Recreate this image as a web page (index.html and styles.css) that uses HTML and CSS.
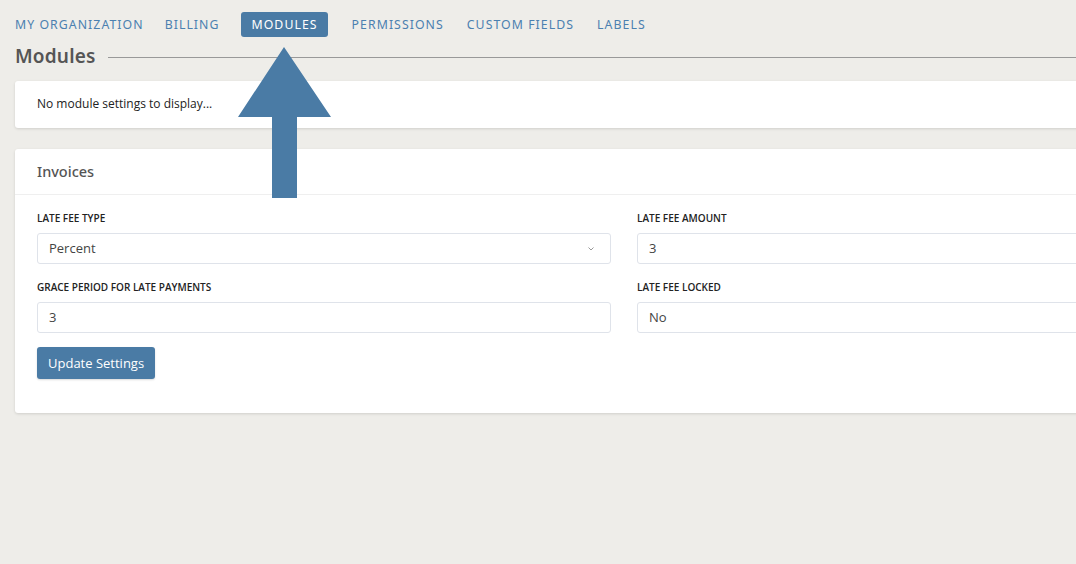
FILE: index.html
```html
<!DOCTYPE html>
<html lang="en">
<head>
  <meta charset="UTF-8">
  <meta name="viewport" content="width=device-width, initial-scale=1.0">
  <title>Settings - Modules</title>
  <link rel="stylesheet" href="styles.css">
</head>
<body>
  <div class="page">
    <nav class="tabs">
      <a class="tab">My Organization</a>
      <a class="tab">Billing</a>
      <a class="tab active">Modules</a>
      <a class="tab">Permissions</a>
      <a class="tab">Custom Fields</a>
      <a class="tab">Labels</a>
    </nav>

    <div class="section-title">
      <h2>Modules</h2>
      <span class="rule"></span>
    </div>

    <div class="card empty">
      No module settings to display...
    </div>

    <div class="card">
      <div class="card-head">Invoices</div>
      <div class="card-body">
        <div class="fields">
          <div class="field">
            <label>Late Fee Type</label>
            <div class="input select">
              <span>Percent</span>
              <svg class="caret" width="8" height="6" viewBox="0 0 8 6"><path d="M1.5 1.5 L4 4 L6.5 1.5" fill="none" stroke="#999" stroke-width="1"/></svg>
            </div>
          </div>
          <div class="field">
            <label>Late Fee Amount</label>
            <div class="input">3</div>
          </div>
          <div class="field">
            <label>Grace Period for Late Payments</label>
            <div class="input">3</div>
          </div>
          <div class="field">
            <label>Late Fee Locked</label>
            <div class="input">No</div>
          </div>
        </div>
        <button class="btn">Update Settings</button>
      </div>
    </div>
  </div>

  <!-- callout arrow pointing at the active tab -->
  <svg class="arrow" width="96" height="154" viewBox="0 0 96 154">
    <polygon points="47,0 94,70 60,70 60,151 35,151 35,70 1,70" fill="#4a7ba5"/>
  </svg>
</body>
</html>
```

FILE: styles.css
```css
html, body {
  margin: 0;
  padding: 0;
  background: #eeede9;
  overflow: hidden;
}

body {
  width: 1076px;
  height: 564px;
  position: relative;
  font-family: "Open Sans", "Noto Sans", sans-serif;
  color: #333;
}

.page {
  width: 1240px;
  padding: 12px 0 0 15px;
}

.tabs {
  display: flex;
  align-items: center;
  gap: 21px;
  height: 25px;
}

.tab {
  font-family: "Noto Sans", "Open Sans", sans-serif;
  font-size: 12.3px;
  letter-spacing: 1.05px;
  text-transform: uppercase;
  color: #4b80b0;
  height: 25px;
  line-height: 25px;
  border-radius: 3px;
}

.tab.active {
  background: #4a7ba5;
  color: #fff;
  padding: 0 10px 0 11px;
  margin-right: 1px;
}

.tab.active ~ .tab {
  margin-left: 2px;
}

.section-title {
  display: flex;
  align-items: center;
  margin-top: 4px;
  height: 30px;
}

.section-title h2 {
  margin: 0;
  font-family: "Noto Sans", sans-serif;
  font-size: 19px;
  font-weight: 600;
  color: #555;
  letter-spacing: 0.2px;
}

.rule {
  flex: 1;
  height: 1px;
  background: #999;
  margin-left: 12px;
  margin-top: 2px;
}

.card {
  background: #fff;
  border-radius: 3px;
  box-shadow: 0 1px 3px rgba(0, 0, 0, 0.13);
}

.card.empty {
  margin-top: 10px;
  height: 47px;
  line-height: 46px;
  padding-left: 22px;
  font-size: 12px;
  color: #222;
}

.card + .card {
  margin-top: 21px;
}

.card-head {
  height: 45px;
  line-height: 45px;
  padding-left: 22px;
  font-family: "Noto Sans", sans-serif;
  font-size: 14.5px;
  font-weight: 500;
  color: #555;
  border-bottom: 1px solid #efefef;
}

.card-body {
  padding: 16px 22px 34px;
}

.fields {
  display: grid;
  grid-template-columns: 574px 574px;
  column-gap: 26px;
  row-gap: 16px;
}

.field label {
  display: block;
  font-size: 10px;
  font-weight: 600;
  text-transform: uppercase;
  color: #222;
  margin-bottom: 8px;
  line-height: 14px;
}

.input {
  height: 29px;
  border: 1px solid #dfe3ea;
  border-radius: 3px;
  padding: 0 11px;
  line-height: 29px;
  font-size: 13px;
  color: #444;
  display: flex;
  align-items: center;
  justify-content: space-between;
}

.caret {
  margin-right: 4px;
}

.btn {
  margin-top: 14px;
  border: none;
  border-radius: 3px;
  background: #4a7ba5;
  color: #fff;
  font-family: "Open Sans", sans-serif;
  font-size: 13px;
  height: 32px;
  padding: 0 11px;
  box-shadow: 0 1px 2px rgba(0, 0, 0, 0.15);
}

.arrow {
  position: absolute;
  left: 237px;
  top: 47px;
}
```
